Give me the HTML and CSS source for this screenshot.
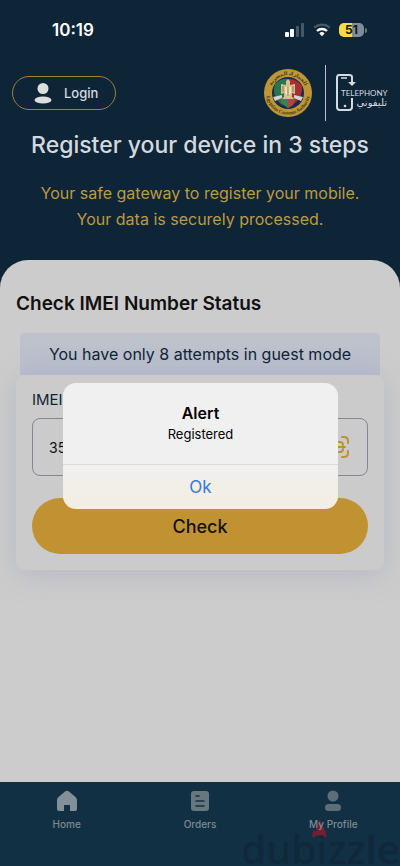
FILE: index.html
```html
<!DOCTYPE html>
<html lang="en">
<head>
  <meta charset="UTF-8">
  <meta name="viewport" content="width=device-width, initial-scale=1.0">
  <title>Telephony</title>
  <link rel="stylesheet" href="styles.css">
</head>
<body>
  <div class="status-bar">
    <span class="clock">10:19</span>
    <div class="status-icons">
      <svg width="20" height="14" viewBox="0 0 20 14">
        <rect x="0" y="9" width="4" height="5" rx="1" fill="#fff"/>
        <rect x="5" y="6" width="4" height="8" rx="1" fill="#fff"/>
        <rect x="11" y="3" width="3" height="11" rx="1" fill="#445868"/>
        <rect x="16" y="0" width="3" height="14" rx="1" fill="#445868"/>
      </svg>
      <svg width="18" height="14" viewBox="0 0 18 14" fill="none" stroke-width="2.3">
        <path d="M1.2 4.7A11.2 11.2 0 0 1 16.8 4.7" stroke="#445868"/>
        <path d="M4 8A7.2 7.2 0 0 1 14 8" stroke="#fff"/>
        <path d="M6.3 10.4A3.9 3.9 0 0 1 11.7 10.4L9 13.2Z" fill="#fff"/>
      </svg>
      <div class="battery-wrap">
        <span class="battery">51</span>
        <span class="battery-tip"></span>
      </div>
    </div>
  </div>

  <header class="header">
    <div class="top-row">
      <a href="#login" class="login">
        <svg width="18" height="21" viewBox="0 0 18 21" fill="#dcdddd">
          <circle cx="9" cy="5.5" r="5.5"/>
          <ellipse cx="9" cy="17" rx="8.5" ry="3.6"/>
        </svg>
        Login
      </a>
      <div class="logos">
        <svg width="50" height="50" viewBox="0 0 50 50">
          <defs>
            <path id="arcTop" d="M7 25A18 18 0 0 1 43 25"/>
            <path id="arcBottom" d="M4 18A22 22 0 1 0 46 18"/>
          </defs>
          <circle cx="25" cy="25" r="24" fill="#bd9737"/>
          <circle cx="25" cy="25" r="16" fill="#1c2b45"/>
          <path d="M12 16Q18 10 25 11V30L19 37Q10 30 11 20Z" fill="#287454"/>
          <path d="M25 11Q33 10 39 18Q40 29 31 36L25 30Z" fill="#a72d38"/>
          <path d="M17 29H33L30 37L25 40L19 36Z" fill="#348457"/>
          <path d="M25 30L32 30L30 37L25 40Z" fill="#b5443c"/>
          <path d="M10 29L19 27V30L12 33ZM40 29L31 27V30L38 33Z" fill="#d4d3ce"/>
          <path d="M25 11L27 13V17L32 16V26L29 25V29L31 31H19L21 29V25L18 26V16L23 17V13Z" fill="#d6c08c"/>
          <path d="M22 19H28V25L25 29L22 25Z" fill="#eadfba"/>
          <path d="M20 18V24M30 18V24M25 19V28" stroke="#967432"/>
          <text class="seal-text" text-anchor="middle"><textPath href="#arcTop" startOffset="50%">الجمارك المصرية</textPath></text>
          <text class="seal-text" text-anchor="middle"><textPath href="#arcBottom" startOffset="50%">Egyptian Customs Authority</textPath></text>
        </svg>
        <span class="divider"></span>
        <svg width="53" height="40" viewBox="0 0 53 40">
          <g fill="none" stroke="#d5dbe0" stroke-width="2">
            <path d="M17 7V4Q17 2 14 2H4Q2 2 2 5V34Q2 37 5 37H14Q17 37 17 34V25"/>
            <path d="M6 5H12" stroke-width="1.5"/>
          </g>
          <path d="M16 4H18V9H21L17 13L13 9H16Z" fill="#d5dbe0"/>
          <circle cx="10" cy="33" r="1.3" fill="#d5dbe0"/>
          <text class="logo-latin" x="6" y="23">TELEPHONY</text>
          <text class="logo-arabic" x="52" y="33" text-anchor="end">تليفوني</text>
        </svg>
      </div>
    </div>
    <h1>Register your device in 3 steps</h1>
    <p class="tagline">Your safe gateway to register your mobile.<br>Your data is securely processed.</p>
  </header>

  <main class="sheet">
    <h2>Check IMEI Number Status</h2>
    <p class="attempts">You have only 8 attempts in guest mode</p>
    <form class="card">
      <label for="imei">IMEI</label>
      <div class="field">
        <input type="text" id="imei" value="35">
        <svg width="24" height="24" viewBox="0 0 24 24" fill="none" stroke="#bf9130" stroke-width="2" stroke-linecap="round">
          <path d="M2 8V6Q2 2 6 2H8M16 2H18Q22 2 22 6V8M22 16V18Q22 22 18 22H16M8 22H6Q2 22 2 18V16"/>
          <path d="M6 12H19M8 9Q8 7 10 7H14Q17 7 17 10M8 15Q8 17 10 17H14Q17 17 17 14"/>
        </svg>
      </div>
      <button type="submit" class="check">Check</button>
    </form>
  </main>

  <nav class="tabs">
    <a href="#home">
      <svg width="22" height="22" viewBox="0 0 22 22"><path d="M9 1.4Q11 0 13 1.4L19.5 7Q21 8.5 21 10V19Q21 21 19 21H14V15H8V21H3Q1 21 1 19V10Q1 8.5 2.5 7Z" fill="#829097"/></svg>
      Home
    </a>
    <a href="#orders">
      <svg width="22" height="22" viewBox="0 0 22 22"><rect x="2" y="1" width="18" height="20" rx="3" fill="#68777d"/><path d="M7 6H10M7 11H15M7 16H15" stroke="#123044" stroke-width="1.6" stroke-linecap="round"/></svg>
      Orders
    </a>
    <a href="#profile">
      <svg width="22" height="22" viewBox="0 0 22 22" fill="#5c6f78"><circle cx="11" cy="6" r="5.5"/><rect x="3" y="14" width="16" height="7" rx="3.5"/></svg>
      My Profile
    </a>
  </nav>

  <div class="watermark">
    <svg width="16" height="20" viewBox="0 0 16 20"><path d="M9 0Q10 5 13 9Q16 14 15 19Q12 16 9 16Q5 16 2 19Q0 14 3 11L5 13Q6 5 9 0Z" fill="#8c1b30" fill-opacity="0.8"/></svg>
    <span>dubizzle</span>
  </div>

  <div class="alert" role="alertdialog" aria-labelledby="alertTitle">
    <div class="alert-body">
      <h3 id="alertTitle">Alert</h3>
      <p>Registered</p>
    </div>
    <button type="button">Ok</button>
  </div>
</body>
</html>
```

FILE: styles.css
```css
* {
  box-sizing: border-box;
}

body {
  margin: 0;
  min-height: 100vh;
  display: flex;
  flex-direction: column;
  position: relative;
  background-color: #0e2437;
  font-family: Inter, "Liberation Sans", sans-serif;
}

h1, h2, h3, p {
  margin: 0;
}

svg {
  flex: none;
}

/* status bar */
.status-bar {
  display: flex;
  justify-content: space-between;
  align-items: center;
  height: 60px;
  padding: 0 33px 0 52px;
  color: white;
}

.clock {
  font-size: 17px;
  font-weight: 600;
}

.status-icons {
  display: flex;
  align-items: center;
  gap: 8px;
}

.battery-wrap {
  display: flex;
  align-items: center;
  gap: 1px;
}

.battery {
  width: 25px;
  height: 14px;
  border-radius: 5px;
  background: linear-gradient(to right, #f9dc3d 52%, #808d98 52%);
  color: #101820;
  font-size: 12px;
  font-weight: 700;
  line-height: 14px;
  text-align: center;
}

.battery-tip {
  width: 2px;
  height: 5px;
  border-radius: 0 2px 2px 0;
  background-color: #6b7884;
}

/* header */
.header {
  padding: 5px 12px 28px;
  text-align: center;
}

.top-row {
  display: flex;
  justify-content: space-between;
  align-items: center;
}

.login {
  display: flex;
  align-items: center;
  gap: 12px;
  height: 34px;
  padding: 0 17px 0 21px;
  border: 1px solid #9c8338;
  border-radius: 17px;
  color: #d5dbe0;
  font-size: 13px;
  font-weight: 500;
  text-decoration: none;
}

.logos {
  display: flex;
  align-items: center;
  gap: 9px;
}

.divider {
  width: 1px;
  height: 56px;
  margin-left: 3px;
  background-color: #b9c1c8;
}

.seal-text {
  font-family: "Liberation Serif", "DejaVu Sans", serif;
  font-size: 5px;
  font-weight: bold;
  fill: #433714;
}

.logo-latin {
  font-family: Lato, sans-serif;
  font-size: 8px;
  fill: #d5dbe0;
}

.logo-arabic {
  font-family: "DejaVu Sans", sans-serif;
  font-size: 10px;
  fill: #d5dbe0;
}

h1 {
  margin-top: 8px;
  color: #d3d9de;
  font-size: 23px;
  font-weight: 500;
  line-height: 32px;
}

.tagline {
  margin-top: 19px;
  color: #bd9a45;
  font-size: 16px;
  line-height: 26px;
}

/* white sheet */
.sheet {
  flex: 1;
  padding: 30px 16px;
  border-radius: 28px 28px 0 0;
  background-color: #cccccc;
}

h2 {
  color: #111111;
  font-size: 19px;
  font-weight: 600;
  line-height: 28px;
}

.attempts {
  margin: 15px 4px 0;
  border-radius: 4px 4px 0 0;
  background: linear-gradient(#bec3ca, #b9bdcd);
  color: #0e2437;
  font-size: 16px;
  line-height: 42px;
  text-align: center;
}

.card {
  display: flex;
  flex-direction: column;
  padding: 16px;
  border-radius: 10px;
  background-color: #cbcbcc;
  box-shadow: 0 4px 28px rgba(140, 150, 180, 0.35);
}

.card label {
  color: #0e2437;
  font-size: 15px;
  line-height: 18px;
}

.field {
  display: flex;
  align-items: center;
  height: 58px;
  margin-top: 9px;
  padding: 0 17px 0 16px;
  border: 1px solid #85888e;
  border-radius: 8px;
}

.field input {
  flex: 1;
  min-width: 0;
  padding: 0;
  border: none;
  background: none;
  color: #111111;
  font-family: inherit;
  font-size: 14px;
}

.check {
  height: 56px;
  margin-top: 22px;
  border: none;
  border-radius: 28px;
  background-color: #c19231;
  color: #111111;
  font-family: inherit;
  font-size: 18px;
  font-weight: 500;
  cursor: pointer;
}

/* bottom tabs */
.tabs {
  display: flex;
  height: 84px;
  padding-top: 8px;
  background-color: #123044;
}

.tabs a {
  flex: 1;
  display: flex;
  flex-direction: column;
  align-items: center;
  gap: 5px;
  z-index: 1;
  color: #7d8a92;
  font-size: 10px;
  font-weight: 500;
  line-height: 14px;
  text-decoration: none;
}

.watermark {
  position: absolute;
  right: 0;
  bottom: 0;
  color: #10293a;
  font-family: "Open Sans", sans-serif;
  font-size: 40px;
  font-weight: 600;
  line-height: 32px;
  height: 33px;
  pointer-events: none;
}

.watermark svg {
  position: absolute;
  left: 70px;
  top: -14px;
}

/* alert */
.alert {
  position: absolute;
  top: 383px;
  left: 63px;
  right: 62px;
  border-radius: 13px;
  overflow: hidden;
  background: linear-gradient(#f0f0f0 60%, #f3eee2);
  text-align: center;
}

.alert-body {
  padding: 19px 16px 20px;
  border-bottom: 1px solid #dadada;
}

.alert h3 {
  font-size: 16px;
  font-weight: 600;
  line-height: 22px;
}

.alert p {
  font-size: 13px;
  line-height: 20px;
}

.alert button {
  width: 100%;
  height: 44px;
  border: none;
  background: none;
  color: #3478e0;
  font-family: inherit;
  font-size: 17px;
  cursor: pointer;
}
```
